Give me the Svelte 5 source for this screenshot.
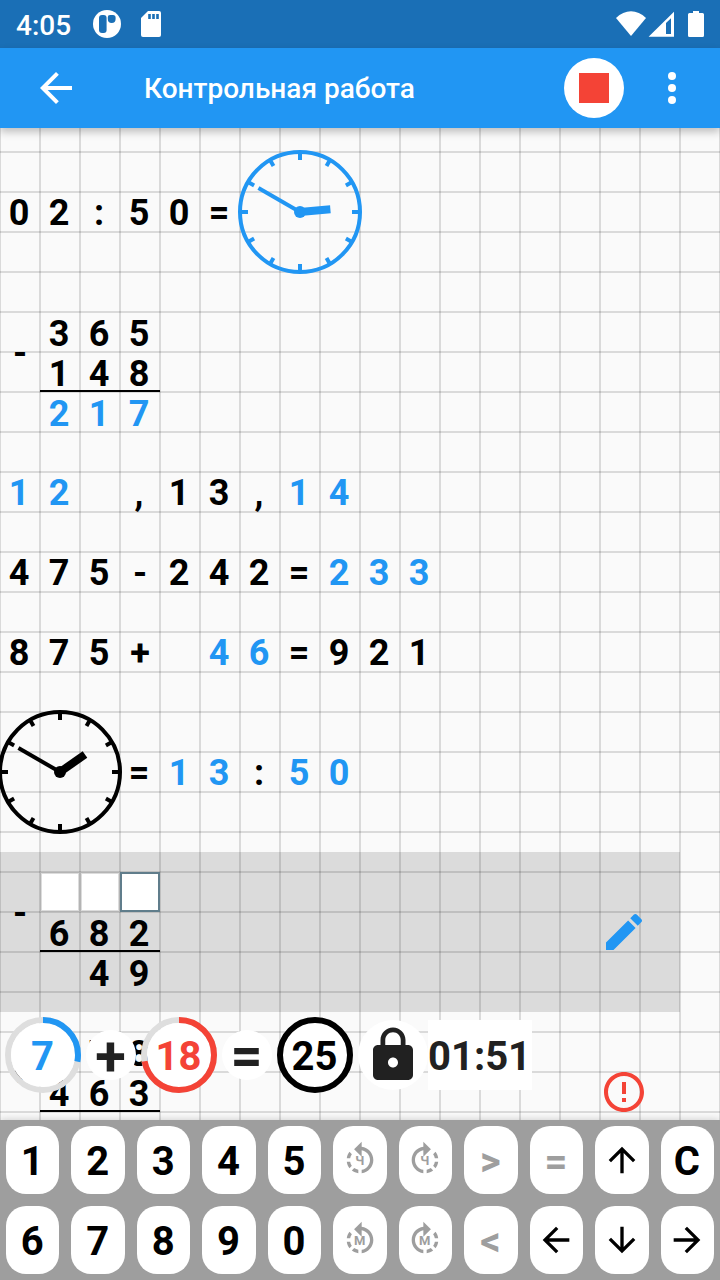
<script>
  const rotateLeft =
    'M7.11 8.53L5.7 7.11C4.8 8.27 4.24 9.61 4.07 11h2.02c.14-.87.49-1.72 1.02-2.47zM6.09 13H4.07c.17 1.39.72 2.73 1.62 3.89l1.41-1.42c-.52-.75-.87-1.59-1.01-2.47zm1.01 5.32c1.16.9 2.51 1.44 3.9 1.61V17.9c-.87-.15-1.71-.49-2.46-1.03L7.1 18.32zM13 4.07V1L8.45 5.55 13 10V6.09c2.84.48 5 2.94 5 5.91s-2.16 5.43-5 5.91v2.02c3.95-.49 7-3.85 7-7.93s-3.05-7.44-7-7.93z';
  const rotateRight =
    'M15.55 5.55L11 1v3.07C7.06 4.56 4 7.92 4 12s3.05 7.44 7 7.93v-2.02c-2.84-.48-5-2.94-5-5.91s2.16-5.43 5-5.91V10l4.55-4.45zM19.93 11c-.17-1.39-.72-2.73-1.62-3.89l-1.42 1.42c.54.75.88 1.6 1.02 2.47h2.02zM13 17.9v2.02c1.39-.17 2.74-.71 3.9-1.61l-1.44-1.44c-.75.54-1.59.89-2.46 1.03zm3.89-2.42l1.42 1.41c.9-1.16 1.45-2.5 1.62-3.89h-2.02c-.14.87-.48 1.72-1.02 2.48z';
  const arrows = {
    left: 'M20 11H7.83l5.59-5.59L12 4l-8 8 8 8 1.41-1.41L7.83 13H20v-2z',
    right: 'M12 4l-1.41 1.41L16.17 11H4v2h12.17l-5.58 5.59L12 20l8-8z',
    up: 'M4 12l1.41 1.41L11 7.83V20h2V7.83l5.58 5.59L20 12l-8-8-8 8z',
    down: 'M20 12l-1.41-1.41L13 16.17V4h-2v12.17l-5.58-5.59L4 12l8 8 8-8z'
  };

  // A cell is one 40px square; `a` marks a pupil's answer.
  const q = (s) => [...s].map((c) => ({ c }));
  const a = (s) => [...s].map((c) => ({ c, answer: true }));

  const tasks = [
    { kind: 'line', parts: [...q('02:50='), { clock: true, answer: true, hour: 85, minute: 300 }] },
    { kind: 'column', op: '-', rows: [q('365'), q('148')], result: a('217') },
    { kind: 'line', parts: [...a('12 '), ...q(',13,'), ...a('14')] },
    { kind: 'line', parts: [...q('475-242='), ...a('233')] },
    { kind: 'line', parts: [...q('875+ '), ...a('46'), ...q('=921')] },
    { kind: 'line', parts: [{ clock: true, hour: 55, minute: 300 }, ...q('='), ...a('13'), ...q(':'), ...a('50')] },
    {
      kind: 'column', op: '-', active: true, mark: 'edit',
      rows: [[{ box: true }, { box: true }, { box: true, focus: true }], q('682')],
      result: q(' 49')
    },
    { kind: 'column', op: '+', mark: 'error', rows: [q(' 78'), q('463')], result: q('   ') }
  ];

  const keys = [
    { t: '1' }, { t: '2' }, { t: '3' }, { t: '4' }, { t: '5' },
    { rot: rotateLeft, l: 'Ч' }, { rot: rotateRight, l: 'Ч' }, { t: '>', off: true }, { t: '=', off: true },
    { arrow: 'up' }, { t: 'C' },
    { t: '6' }, { t: '7' }, { t: '8' }, { t: '9' }, { t: '0' },
    { rot: rotateLeft, l: 'М' }, { rot: rotateRight, l: 'М' }, { t: '<', off: true },
    { arrow: 'left' }, { arrow: 'down' }, { arrow: 'right' }
  ];

  const ringLength = 2 * Math.PI * 35;
  const hours = Array.from({ length: 12 }, (_, i) => i);
</script>

{#snippet cell(p)}
  {#if p.clock}
    <svg class="clock" class:answer={p.answer} viewBox="-62 -62 124 124">
      <circle r="60" fill="none" stroke="currentColor" stroke-width="4" />
      {#each hours as h}
        <path d={h % 3 ? 'M0-60V-53' : 'M0-60V-52'} transform="rotate({h * 30})" stroke="currentColor" stroke-width="4" />
      {/each}
      <path d="M0 0V-48" transform="rotate({p.minute})" stroke="currentColor" stroke-width="4" />
      <path d="M0 0V-30.5" transform="rotate({p.hour})" stroke="currentColor" stroke-width="8" />
      <circle r="6" fill="currentColor" />
    </svg>
  {:else if p.box}
    <span class="box" class:focus={p.focus}></span>
  {:else}
    <span class="cell" class:answer={p.answer} class:operator={p.c === '+' || p.c === '-'}>{p.c}</span>
  {/if}
{/snippet}

{#snippet ring(value, share, tone)}
  <div class="ring {tone}">
    <svg viewBox="0 0 76 76">
      <circle class="track" cx="38" cy="38" r="35" />
      <circle cx="38" cy="38" r="32" fill="#fff" />
      <circle class="arc" cx="38" cy="38" r="35" stroke-dasharray="{ringLength * share} {ringLength}" transform="rotate(-90 38 38)" />
    </svg>
    <span>{value}</span>
  </div>
{/snippet}

<div class="screen">
  <header class="status">
    <span class="time">4:05</span>
    <svg class="app-icon" viewBox="0 0 28 28">
      <circle cx="14" cy="14" r="14" fill="#fff" />
      <rect x="6" y="5" width="7.6" height="18" rx="3" />
      <path d="M17 5h3a2.6 2.6 0 0 1 2.6 2.6v1.4a3.9 3.9 0 0 1-7.8 0V7.3A2.2 2.2 0 0 1 17 5z" />
    </svg>
    <svg class="sd-icon" viewBox="0 0 20 26">
      <path d="M7 0H18a2 2 0 0 1 2 2V24a2 2 0 0 1-2 2H2a2 2 0 0 1-2-2V7z" fill="#fff" />
      <path d="M7.2 3h2.6v5H7.2zM11.2 3h2.6v5H11.2zM15.2 3h2.6v5H15.2z" />
    </svg>
    <svg class="signals" viewBox="0 0 90 28">
      <path d="M0 8C9-1 21-1 30 8L15 26z" fill="#fff" />
      <path d="M58 1.800V26.700H32.600zM55 8.300L50 13V24H55z" fill="#fff" fill-rule="evenodd" />
      <path d="M77 1h6v2h3.500a1.500 1.500 0 0 1 1.500 1.500V25.500a1.500 1.500 0 0 1-1.500 1.500H73.500a1.500 1.500 0 0 1-1.500-1.500V4.500A1.500 1.500 0 0 1 73.500 3H77z" fill="#fff" />
    </svg>
  </header>

  <div class="appbar">
    <svg class="icon48" viewBox="0 0 24 24" fill="#fff"><path d={arrows.left} /></svg>
    <h1>Контрольная работа</h1>
    <button class="record" aria-label="Стоп"><i></i></button>
    <svg class="icon48" viewBox="0 0 24 24" fill="#fff">
      <circle cx="12" cy="6" r="2" /><circle cx="12" cy="12" r="2" /><circle cx="12" cy="18" r="2" />
    </svg>
  </div>

  <main class="paper">
    {#each tasks as t}
      <section class="task" class:active={t.active}>
        {#if t.kind === 'line'}
          <div class="line">{#each t.parts as p}{@render cell(p)}{/each}</div>
        {:else}
          <div class="column">
            <span class="op">{t.op}</span>
            <div class="sum">
              <div class="operands">
                {#each t.rows as r}<div class="digits">{#each r as p}{@render cell(p)}{/each}</div>{/each}
              </div>
              <div class="digits">{#each t.result as p}{@render cell(p)}{/each}</div>
            </div>
          </div>
        {/if}
        {#if t.mark === 'edit'}
          <svg class="icon48" viewBox="0 0 24 24" fill="#2196f3">
            <path d="M3 17.250V21h3.750L17.810 9.940l-3.750-3.750L3 17.250zM20.710 7.040c.390-.390.390-1.020 0-1.410l-2.340-2.340c-.390-.390-1.020-.390-1.410 0l-1.830 1.830 3.750 3.750 1.830-1.830z" />
          </svg>
        {:else if t.mark === 'error'}
          <svg class="icon48" viewBox="0 0 24 24" fill="#f44336">
            <path d="M11 15h2v2h-2zm0-8h2v6h-2zm.990-5C6.470 2 2 6.480 2 12s4.470 10 9.990 10C17.520 22 22 17.520 22 12S17.520 2 11.990 2zM12 20c-4.420 0-8-3.580-8-8s3.580-8 8-8 8 3.580 8 8-3.580 8-8 8z" />
          </svg>
        {/if}
      </section>
    {/each}
  </main>

  <div class="score">
    {@render ring('7', 0.28, 'blue')}
    <span class="sign">+</span>
    {@render ring('18', 0.72, 'red')}
    <span class="sign">=</span>
    {@render ring('25', 1, 'black')}
    <div class="timer">
      <span class="lock">
        <svg viewBox="0 0 24 24" fill="#212121">
          <path fill-rule="evenodd" d="M18 8h-1V6c0-2.760-2.240-5-5-5S7 3.240 7 6v2H6c-1.100 0-2 .900-2 2v10c0 1.100.900 2 2 2h12c1.100 0 2-.900 2-2V10c0-1.100-.900-2-2-2zm-6 9c-1.100 0-2-.900-2-2s.900-2 2-2 2 .900 2 2-.900 2-2 2zM15.100 8H8.900V6c0-1.710 1.390-3.100 3.100-3.100s3.100 1.390 3.100 3.100v2z" />
        </svg>
      </span>
      <time>01:51</time>
    </div>
  </div>

  <footer class="keypad">
    {#each keys as k}
      <button class="key" class:off={k.off || k.rot}>
        {#if k.t}
          <span>{k.t}</span>
        {:else if k.rot}
          <svg viewBox="0 0 24 24" fill="currentColor">
            <path d={k.rot} />
            <text x="11.800" y="14.800" text-anchor="middle">{k.l}</text>
          </svg>
        {:else}
          <svg viewBox="0 0 24 24" fill="currentColor"><path d={arrows[k.arrow]} /></svg>
        {/if}
      </button>
    {/each}
  </footer>
</div>

<style>
  :global(body) {
    margin: 0;
    overflow: hidden;
  }

  .screen {
    position: relative;
    display: flex;
    flex-direction: column;
    width: 720px;
    height: 1280px;
    overflow: hidden;
    font-family: Roboto, sans-serif;
    background: #fafafa;
  }

  svg {
    display: block;
    flex: none;
  }

  .status {
    display: flex;
    align-items: center;
    flex: none;
    box-sizing: border-box;
    height: 48px;
    padding: 0 14px 0 16px;
    background: #1a6fb6;
    color: #fff;
    fill: #1a6fb6;
  }

  .time {
    width: 77px;
    padding-top: 3px;
    font-size: 28px;
    font-weight: 500;
    line-height: 45px;
  }

  .app-icon {
    width: 28px;
    height: 28px;
  }

  .sd-icon {
    width: 20px;
    height: 26px;
    margin-left: 20px;
  }

  .signals {
    width: 90px;
    height: 28px;
    margin-left: auto;
  }

  .appbar {
    position: relative;
    z-index: 1;
    display: flex;
    align-items: center;
    flex: none;
    box-sizing: border-box;
    height: 80px;
    padding: 0 24px 0 32px;
    background: #2196f3;
    box-shadow: 0 4px 8px rgba(0, 0, 0, 0.24);
  }

  .icon48 {
    width: 48px;
    height: 48px;
  }

  h1 {
    flex: 1;
    margin: 2px 0 0 64px;
    color: #fff;
    font-size: 28px;
    font-weight: 500;
    line-height: 40px;
  }

  .record {
    display: grid;
    place-items: center;
    width: 60px;
    height: 60px;
    margin-right: 24px;
    padding: 0;
    border: 0;
    border-radius: 50%;
    background: #fff;
  }

  .record i {
    width: 30px;
    height: 30px;
    background: #f44336;
  }

  .paper {
    flex: 1;
    min-height: 0;
    padding-top: 4px;
    overflow: hidden;
    background-color: #fafafa;
    background-image:
      linear-gradient(90deg, rgba(0, 0, 0, 0.13) 2px, transparent 2px),
      linear-gradient(rgba(0, 0, 0, 0.13) 2px, transparent 2px);
    background-size: 40px 40px;
    background-position: -1px 0, 0 23px;
  }

  .task {
    display: flex;
    align-items: center;
    justify-content: space-between;
    box-sizing: border-box;
    width: 680px;
    padding: 20px 32px 20px 0;
  }

  .active {
    background: rgba(0, 0, 0, 0.12);
  }

  .line,
  .digits {
    display: flex;
    align-items: center;
  }

  .cell {
    box-sizing: border-box;
    width: 40px;
    height: 40px;
    padding-right: 2px;
    font-size: 36px;
    font-weight: 700;
    line-height: 43px;
    text-align: center;
    white-space: pre;
  }

  .operator {
    padding-right: 0;
  }

  .answer {
    color: #2196f3;
  }

  .clock {
    width: 124px;
    height: 124px;
    margin: -2px;
  }

  .column {
    display: flex;
  }

  .op {
    width: 40px;
    height: 80px;
    font-size: 36px;
    font-weight: 700;
    line-height: 83px;
    text-align: center;
  }

  .operands {
    box-sizing: border-box;
    height: 80px;
    border-bottom: 2px solid #000;
  }

  .sum .cell {
    line-height: 45px;
  }

  .box {
    box-sizing: border-box;
    width: 40px;
    height: 40px;
    border: 1px solid #b4b4b4;
    box-shadow: inset 0 0 0 1px #dcdcdc;
    background: #fff;
  }

  .focus {
    border: 2px solid #607d8b;
    box-shadow: none;
  }

  /* Floats above the sheet. */
  .score {
    position: absolute;
    left: 5px;
    top: 1017px;
    display: flex;
    align-items: center;
    gap: 5px;
    height: 76px;
  }

  .ring {
    display: grid;
    width: 76px;
    height: 76px;
    font-size: 40px;
    font-weight: 700;
  }

  .ring svg,
  .ring span {
    grid-area: 1 / 1;
  }

  .ring span {
    height: 76px;
    padding-right: 1px;
    line-height: 80px;
    text-align: center;
  }

  .ring circle.track,
  .ring circle.arc {
    fill: none;
    stroke-width: 6;
  }

  .track {
    stroke: #dedede;
  }

  .arc {
    stroke: currentColor;
  }

  .blue {
    color: #2196f3;
  }

  .red {
    color: #f44336;
  }

  .black {
    color: #000;
  }

  .sign {
    box-sizing: border-box;
    width: 50px;
    height: 50px;
    padding-right: 1px;
    border-radius: 50%;
    background: #fff;
    color: #212121;
    font-size: 56px;
    font-weight: 700;
    line-height: 52px;
    text-align: center;
  }

  .timer {
    display: flex;
  }

  .lock {
    display: grid;
    place-items: center;
    width: 70px;
    height: 70px;
    border-radius: 50%;
    background: #fff;
  }

  .lock svg {
    width: 60px;
    height: 60px;
  }

  time {
    width: 104px;
    height: 70px;
    background: #fff;
    color: #212121;
    font-size: 40px;
    font-weight: 700;
    line-height: 74px;
  }

  .keypad {
    z-index: 1;
    display: grid;
    grid-template-columns: repeat(11, 1fr);
    grid-template-rows: 68px 68px;
    gap: 12px;
    box-sizing: border-box;
    flex: none;
    height: 160px;
    padding: 6px;
    background: #9e9e9e;
    box-shadow: 0 0 8px rgba(0, 0, 0, 0.2);
  }

  .key {
    display: grid;
    place-items: center;
    min-width: 0;
    padding: 0;
    border: 0;
    border-radius: 20px;
    background: #fff;
    color: #000;
    font: 700 40px/60px Roboto, sans-serif;
  }

  .key span {
    padding: 4px 1px 0 0;
  }

  .off {
    color: #9e9e9e;
  }

  .key svg {
    width: 40px;
    height: 40px;
  }

  .key text {
    font: 700 7.800px Roboto, sans-serif;
  }
</style>
